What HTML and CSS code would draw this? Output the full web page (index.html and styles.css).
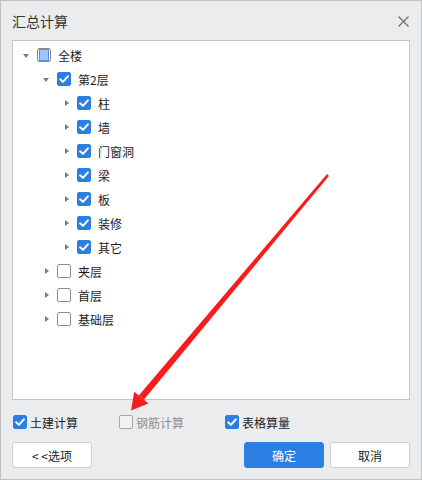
FILE: index.html
```html
<!DOCTYPE html>
<html lang="zh-CN">
<head>
<meta charset="utf-8">
<title>汇总计算</title>
<link rel="stylesheet" href="styles.css">
</head>
<body>
<div class="dialog">
  <div class="titlebar">
    <span class="title">汇总计算</span>
    <svg class="close" width="11" height="11" viewBox="0 0 11 11"><path d="M0.5 0.5 L10.5 10.5 M10.5 0.5 L0.5 10.5" stroke="#6e6e6e" stroke-width="1.2" fill="none"/></svg>
  </div>
  <div class="tree">
    <div class="row l0"><span class="tog down"></span><span class="cb partial"></span><span class="lbl">全楼</span></div>
    <div class="row l1"><span class="tog down"></span><span class="cb checked"><svg viewBox="0 0 14 14"><path d="M3.2 7.3 L5.9 9.9 L10.9 4.3"/></svg></span><span class="lbl">第2层</span></div>
    <div class="row l2"><span class="tog right"></span><span class="cb checked"><svg viewBox="0 0 14 14"><path d="M3.2 7.3 L5.9 9.9 L10.9 4.3"/></svg></span><span class="lbl">柱</span></div>
    <div class="row l2"><span class="tog right"></span><span class="cb checked"><svg viewBox="0 0 14 14"><path d="M3.2 7.3 L5.9 9.9 L10.9 4.3"/></svg></span><span class="lbl">墙</span></div>
    <div class="row l2"><span class="tog right"></span><span class="cb checked"><svg viewBox="0 0 14 14"><path d="M3.2 7.3 L5.9 9.9 L10.9 4.3"/></svg></span><span class="lbl">门窗洞</span></div>
    <div class="row l2"><span class="tog right"></span><span class="cb checked"><svg viewBox="0 0 14 14"><path d="M3.2 7.3 L5.9 9.9 L10.9 4.3"/></svg></span><span class="lbl">梁</span></div>
    <div class="row l2"><span class="tog right"></span><span class="cb checked"><svg viewBox="0 0 14 14"><path d="M3.2 7.3 L5.9 9.9 L10.9 4.3"/></svg></span><span class="lbl">板</span></div>
    <div class="row l2"><span class="tog right"></span><span class="cb checked"><svg viewBox="0 0 14 14"><path d="M3.2 7.3 L5.9 9.9 L10.9 4.3"/></svg></span><span class="lbl">装修</span></div>
    <div class="row l2"><span class="tog right"></span><span class="cb checked"><svg viewBox="0 0 14 14"><path d="M3.2 7.3 L5.9 9.9 L10.9 4.3"/></svg></span><span class="lbl">其它</span></div>
    <div class="row l1"><span class="tog right"></span><span class="cb"></span><span class="lbl">夹层</span></div>
    <div class="row l1"><span class="tog right"></span><span class="cb"></span><span class="lbl">首层</span></div>
    <div class="row l1"><span class="tog right"></span><span class="cb"></span><span class="lbl">基础层</span></div>
  </div>
  <div class="opts">
    <div class="opt"><span class="cb checked"><svg viewBox="0 0 14 14"><path d="M3.2 7.3 L5.9 9.9 L10.9 4.3"/></svg></span><span class="olbl">土建计算</span></div>
    <div class="opt disabled"><span class="cb"></span><span class="olbl">钢筋计算</span></div>
    <div class="opt"><span class="cb checked"><svg viewBox="0 0 14 14"><path d="M3.2 7.3 L5.9 9.9 L10.9 4.3"/></svg></span><span class="olbl">表格算量</span></div>
  </div>
  <div class="buttons">
    <button class="btn">&lt; &lt;选项</button>
    <span class="spacer"></span>
    <button class="btn primary">确定</button>
    <button class="btn">取消</button>
  </div>
  <svg class="arrow" width="422" height="480" viewBox="0 0 422 480">
    <polygon points="328.9,175.9 327.1,174.1 138.8,395.6 143.8,399.8" fill="#f81c1c"/>
    <polygon points="131,410.5 134.2,391.8 148.4,403.6" fill="#f81c1c"/>
  </svg>
</div>
</body>
</html>
```

FILE: styles.css
```css
* { box-sizing: border-box; }
html, body { margin: 0; padding: 0; }
body {
  font-family: "Noto Sans CJK SC", "Noto Sans", sans-serif;
  background: #ebecee;
}
.dialog {
  position: relative;
  width: 422px;
  height: 480px;
  border: 1px solid #c2c2c2;
  background: #ebecee;
  padding: 0 11px;
  display: flex;
  flex-direction: column;
}
.titlebar {
  height: 39px;
  display: flex;
  align-items: center;
  justify-content: space-between;
  padding-left: 0;
  padding-right: 1px;
}
.title {
  font-size: 14px;
  color: #333;
  margin-top: 1px;
}
.close { display: block; margin-top: 1px; }
.tree {
  height: 360px;
  background: #fff;
  border: 1px solid #c6c6c6;
  padding-top: 2px;
}
.row {
  height: 24px;
  display: flex;
  align-items: center;
  padding-left: 10px;
  font-size: 12px;
  color: #1c1c1c;
}
.row.l1 { padding-left: 30px; }
.row.l2 { padding-left: 50px; }
.tog {
  width: 14px;
  height: 14px;
  position: relative;
  flex: none;
}
.tog::before {
  content: "";
  position: absolute;
  width: 0;
  height: 0;
}
.tog.down::before {
  left: 0;
  top: 6px;
  border-left: 3px solid transparent;
  border-right: 3px solid transparent;
  border-top: 4px solid #7c7c7c;
}
.tog.right::before {
  left: 2px;
  top: 4px;
  border-top: 3.5px solid transparent;
  border-bottom: 3.5px solid transparent;
  border-left: 4px solid #7c7c7c;
}
.cb {
  width: 14px;
  height: 14px;
  flex: none;
  border: 1px solid #8e8e8e;
  border-radius: 2px;
  background: #fff;
  display: flex;
  align-items: center;
  justify-content: center;
}
.cb.checked {
  background: #2c7fe2;
  border-color: #2c7fe2;
}
.cb svg {
  width: 14px;
  height: 14px;
  flex: none;
}
.cb svg path {
  fill: none;
  stroke: #fff;
  stroke-width: 2;
  stroke-linecap: round;
  stroke-linejoin: round;
}
.cb.partial {
  border-color: #8a8a8a;
  padding: 1px;
}
.cb.partial::before {
  content: "";
  display: block;
  width: 10px;
  height: 10px;
  background: #9ec6f7;
  border: 1px solid #4f92e3;
}
.lbl { margin-left: 7px; }
.opts {
  display: flex;
  height: 20px;
  margin-top: 12px;
  padding-left: 1px;
  align-items: center;
}
.opt {
  width: 106px;
  display: flex;
  align-items: center;
  font-size: 12px;
  color: #1c1c1c;
}
.olbl { margin-left: 3px; }
.opt.disabled { color: #8f8f8f; }
.opt.disabled .cb { border-color: #a8a8a8; background: #f2f2f2; }
.buttons {
  display: flex;
  margin-top: 10px;
  height: 26px;
  gap: 6px;
}
.spacer { flex: 1; }
.btn {
  width: 80px;
  height: 26px;
  border: 1px solid #cfcfcf;
  border-radius: 3px;
  background: #fff;
  font-family: "Noto Sans CJK SC", "Noto Sans", sans-serif;
  font-size: 12px;
  color: #1c1c1c;
  padding: 0;
}
.btn.primary {
  background: #2c7fe2;
  border-color: #2c7fe2;
  color: #fff;
}
.arrow {
  position: absolute;
  left: -1px;
  top: -1px;
  pointer-events: none;
}
```
